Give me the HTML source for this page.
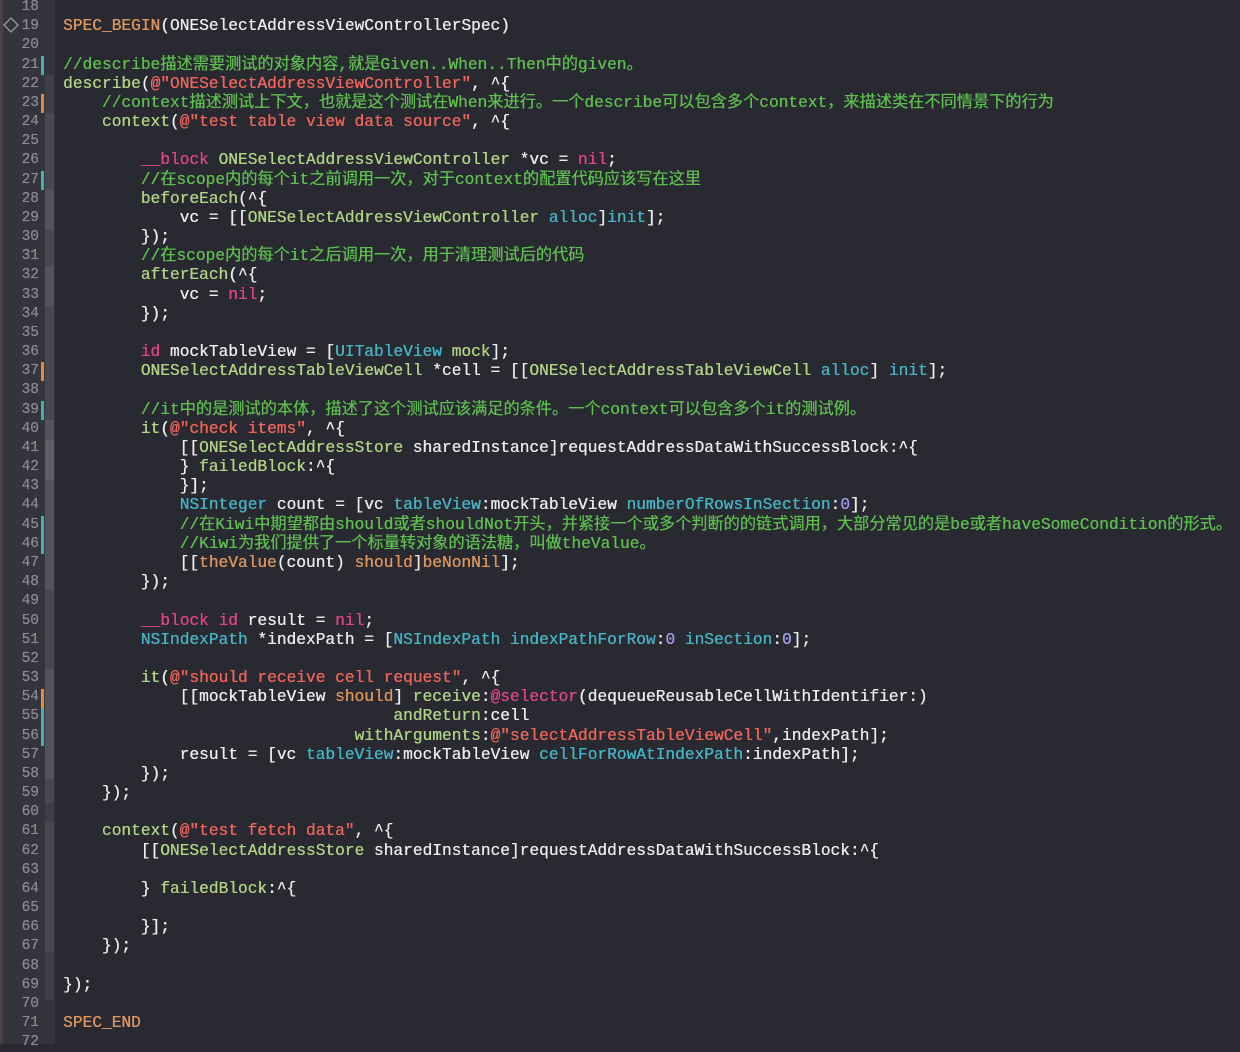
<!DOCTYPE html>
<html><head><meta charset="utf-8"><style>
html,body{margin:0;padding:0;width:1240px;height:1044px;overflow:hidden;background:#292a31;}
#gut{position:absolute;left:0;top:0;width:55px;height:1044px;background:#33343c;}
#edge{position:absolute;left:0;top:0;width:3px;height:1044px;background:#4a3f48;}
.rib{position:absolute;left:45px;width:9px;}
.mk{position:absolute;left:41px;width:3px;height:19px;}
#nums{position:absolute;left:0;top:-2px;width:39px;text-align:right;font:14.5px/19.17px "Liberation Mono",monospace;color:#8c8d94;white-space:pre;text-shadow:0 0 0.5px #8c8d94;}
#code{position:absolute;left:63px;top:-2px;font:16.2px/19.17px "Liberation Mono","Noto Sans CJK SC",monospace;color:#eceded;white-space:pre;text-shadow:0.3px 0 0 currentColor;}
.c{color:#5fbf4f}.s{color:#f2655c}.k{color:#e1438d}.p{color:#b3d485}.y{color:#45b6c6}.m{color:#e0975e}.n{color:#a49cf0}
</style></head><body>
<div id="gut"></div><div id="edge"></div>
<div class="rib" style="top:75px;height:925px;background:#3e3f47"></div>
<div class="rib" style="top:113px;height:690px;background:#474850"></div>
<div class="rib" style="top:190px;height:40px;background:#52535b"></div>
<div class="rib" style="top:266px;height:40px;background:#52535b"></div>
<div class="rib" style="top:420px;height:170px;background:#52535b"></div>
<div class="rib" style="top:440px;height:40px;background:#5d5e66"></div>
<div class="rib" style="top:669px;height:110px;background:#52535b"></div>
<div class="rib" style="top:822px;height:130px;background:#474850"></div>
<div class="mk" style="top:56px;background:#3fb3b0"></div>
<div class="mk" style="top:94px;background:#e8893a"></div>
<div class="mk" style="top:171px;background:#3fb3b0"></div>
<div class="mk" style="top:362px;background:#e8893a"></div>
<div class="mk" style="top:401px;background:#3fb3b0"></div>
<div class="mk" style="top:516px;height:38px;background:#3fb3b0"></div>
<div class="mk" style="top:689px;background:#e8893a"></div>
<div class="mk" style="top:708px;height:38px;background:#3fb3b0"></div>
<svg style="position:absolute;left:3px;top:17px" width="16" height="16"><path d="M8 1 L15 8 L8 15 L1 8 Z" fill="none" stroke="#9a9aa0" stroke-width="1.3"/></svg>
<div id="nums">18
19
20
21
22
23
24
25
26
27
28
29
30
31
32
33
34
35
36
37
38
39
40
41
42
43
44
45
46
47
48
49
50
51
52
53
54
55
56
57
58
59
60
61
62
63
64
65
66
67
68
69
70
71
72</div>
<div id="code">
<span class="m">SPEC_BEGIN</span>(ONESelectAddressViewControllerSpec)

<span class="c">//describe描述需要测试的对象内容,就是Given..When..Then中的given。</span>
<span class="p">describe</span>(<span class="s">@"ONESelectAddressViewController"</span>, ^{
    <span class="c">//context描述测试上下文，也就是这个测试在When来进行。一个describe可以包含多个context，来描述类在不同情景下的行为</span>
    <span class="p">context</span>(<span class="s">@"test table view data source"</span>, ^{

        <span class="k">__block</span> <span class="p">ONESelectAddressViewController</span> *vc = <span class="k">nil</span>;
        <span class="c">//在scope内的每个it之前调用一次，对于context的配置代码应该写在这里</span>
        <span class="p">beforeEach</span>(^{
            vc = [[<span class="p">ONESelectAddressViewController</span> <span class="y">alloc</span>]<span class="y">init</span>];
        });
        <span class="c">//在scope内的每个it之后调用一次，用于清理测试后的代码</span>
        <span class="p">afterEach</span>(^{
            vc = <span class="k">nil</span>;
        });

        <span class="k">id</span> mockTableView = [<span class="y">UITableView</span> <span class="p">mock</span>];
        <span class="p">ONESelectAddressTableViewCell</span> *cell = [[<span class="p">ONESelectAddressTableViewCell</span> <span class="y">alloc</span>] <span class="y">init</span>];

        <span class="c">//it中的是测试的本体，描述了这个测试应该满足的条件。一个context可以包含多个it的测试例。</span>
        <span class="p">it</span>(<span class="s">@"check items"</span>, ^{
            [[<span class="p">ONESelectAddressStore</span> sharedInstance]requestAddressDataWithSuccessBlock:^{
            } <span class="p">failedBlock</span>:^{
            }];
            <span class="y">NSInteger</span> count = [vc <span class="y">tableView</span>:mockTableView <span class="y">numberOfRowsInSection</span>:<span class="n">0</span>];
            <span class="c">//在Kiwi中期望都由should或者shouldNot开头，并紧接一个或多个判断的的链式调用，大部分常见的是be或者haveSomeCondition的形式。</span>
            <span class="c">//Kiwi为我们提供了一个标量转对象的语法糖，叫做theValue。</span>
            [[<span class="m">theValue</span>(count) <span class="m">should</span>]<span class="m">beNonNil</span>];
        });

        <span class="k">__block</span> <span class="k">id</span> result = <span class="k">nil</span>;
        <span class="y">NSIndexPath</span> *indexPath = [<span class="y">NSIndexPath</span> <span class="y">indexPathForRow</span>:<span class="n">0</span> <span class="y">inSection</span>:<span class="n">0</span>];

        <span class="p">it</span>(<span class="s">@"should receive cell request"</span>, ^{
            [[mockTableView <span class="m">should</span>] <span class="p">receive</span>:<span class="k">@selector</span>(dequeueReusableCellWithIdentifier:)
                                  <span class="p">andReturn</span>:cell
                              <span class="p">withArguments</span>:<span class="s">@"selectAddressTableViewCell"</span>,indexPath];
            result = [vc <span class="y">tableView</span>:mockTableView <span class="y">cellForRowAtIndexPath</span>:indexPath];
        });
    });

    <span class="p">context</span>(<span class="s">@"test fetch data"</span>, ^{
        [[<span class="p">ONESelectAddressStore</span> sharedInstance]requestAddressDataWithSuccessBlock:^{

        } <span class="p">failedBlock</span>:^{

        }];
    });

});

<span class="m">SPEC_END</span>
</div>
</body></html>
